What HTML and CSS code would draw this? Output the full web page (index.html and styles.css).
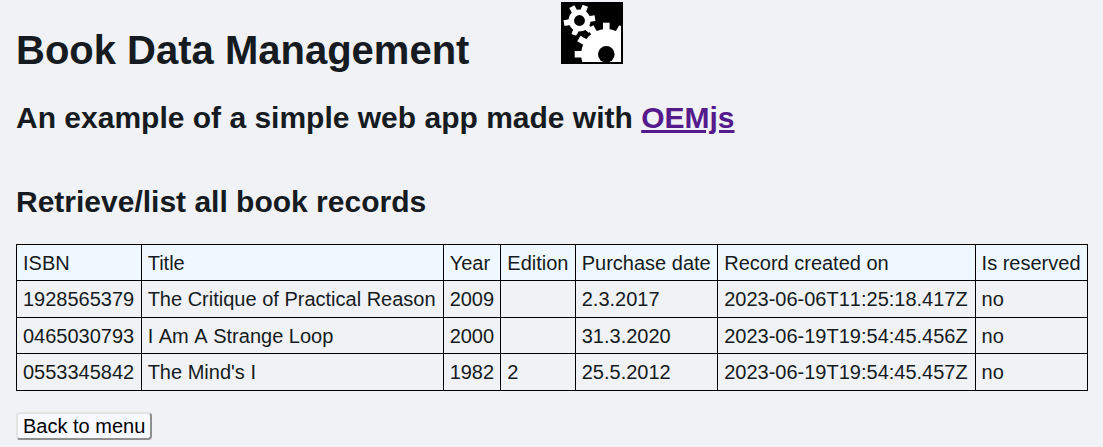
FILE: index.html
```html
<!DOCTYPE html>
<html lang="en">
<head>
<meta charset="utf-8">
<meta name="viewport" content="width=device-width, initial-scale=1">
<title>Book Data Management</title>
<link rel="stylesheet" href="styles.css">
</head>
<body>
<header class="page-header">
  <div class="title-row">
    <h1 class="page-title">Book Data Management</h1>
    <svg class="logo" viewBox="0 0 62 62" role="img" aria-label="Two gears">
      <defs>
        <clipPath id="frame"><rect x="2" y="2" width="58" height="58"/></clipPath>
      </defs>
      <rect width="62" height="62" fill="#000"/>
      <g clip-path="url(#frame)" fill="#fff" stroke="#fff">
        <circle cx="18.5" cy="18.5" r="11" stroke="none"/>
        <g stroke-width="5.8">
          <path d="M18.5 18.5 L24.3 3.8"/>
          <path d="M18.5 18.5 L10.8 4.6"/>
          <path d="M18.5 18.5 L34 16.2"/>
          <path d="M18.5 18.5 L29.8 28.8"/>
          <path d="M18.5 18.5 L13.2 33"/>
          <path d="M18.5 18.5 L3 21.2"/>
        </g>
        <circle cx="45.3" cy="52.3" r="25.2" stroke="none"/>
        <g stroke-width="6.6">
          <path d="M45.3 52.3 V20.7"/>
          <path d="M45.3 52.3 H13.7"/>
          <path d="M45.3 52.3 L17.9 36.5"/>
          <path d="M45.3 52.3 L29.5 24.9"/>
          <path d="M45.3 52.3 L61.1 24.9"/>
        </g>
      </g>
      <path d="M16 34.5 L18.5 31 L20.8 31 L23.5 34.2 L28 31.5" fill="none" stroke="#000" stroke-width="2.6"/>
      <circle cx="18.5" cy="18.5" r="5.4"/>
      <circle cx="45.3" cy="52.3" r="8.3"/>
    </svg>
  </div>
  <h2 class="heading">An example of a simple web app made with <a class="link" href="#">OEMjs</a></h2>
</header>
<main class="records">
  <h2 class="heading">Retrieve/list all book records</h2>
  <table class="record-table">
    <thead>
      <tr><th>ISBN</th><th>Title</th><th>Year</th><th>Edition</th><th>Purchase date</th><th>Record created on</th><th>Is reserved</th></tr>
    </thead>
    <tbody>
      <tr><td>1928565379</td><td>The Critique of Practical Reason</td><td>2009</td><td></td><td>2.3.2017</td><td>2023-06-06T11:25:18.417Z</td><td>no</td></tr>
      <tr><td>0465030793</td><td>I Am A Strange Loop</td><td>2000</td><td></td><td>31.3.2020</td><td>2023-06-19T19:54:45.456Z</td><td>no</td></tr>
      <tr><td>0553345842</td><td>The Mind's I</td><td>1982</td><td>2</td><td>25.5.2012</td><td>2023-06-19T19:54:45.457Z</td><td>no</td></tr>
    </tbody>
  </table>
  <button class="back-button" type="button">Back to menu</button>
</main>
</body>
</html>
```
FILE: styles.css
```css
body {
  margin: 0;
  padding: 2px 15px 7px 16px;
  background: #f0f2f6;
  color: #151b20;
  font: 20px/23px "Liberation Sans", Arial, sans-serif;
}

.title-row {
  display: flex;
  align-items: flex-start;
  gap: 92px;
}

.page-title {
  margin: 0;
  padding-top: 25px;
  font-size: 40px;
  line-height: 46px;
}

.logo {
  width: 62px;
  height: 62px;
  flex: none;
}

.heading {
  margin: 0;
  font-size: 30px;
  line-height: 34px;
}

.page-header .heading {
  margin-top: 28px;
}

.link {
  color: #551a8b;
  text-decoration-thickness: 3px;
}

.records {
  margin-top: 50px;
}

.record-table {
  width: 100%;
  margin: 25px 0 21px;
  border-collapse: collapse;
}

.record-table th,
.record-table td {
  padding: 7px 6px 6px;
  border: 1px solid #000;
  font-weight: normal;
  text-align: left;
  white-space: nowrap;
}

.record-table td {
  font-kerning: none;
}

.record-table th,
.record-table tr:nth-child(even) td {
  padding-bottom: 5px;
}

.record-table th {
  background: #f0f8ff;
}

.back-button {
  display: block;
  padding: 1px 5px 0;
  border: 2px outset #e3e3e3;
  border-radius: 4px;
  background: #f8f8ff;
  color: #000;
  font: inherit;
}
```
